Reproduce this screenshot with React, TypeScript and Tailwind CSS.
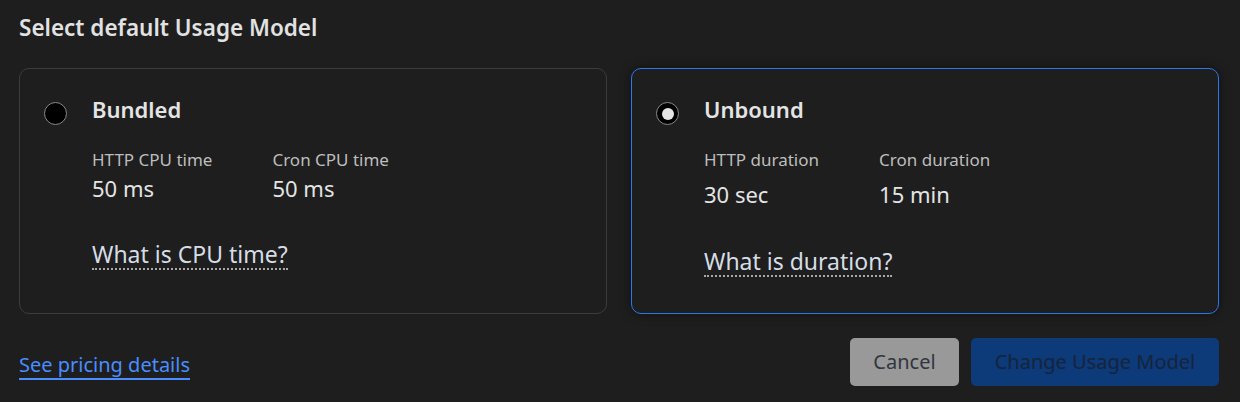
import { useState } from 'react';

type Plan = {
  id: string;
  name: string;
  stats: { label: string; value: string }[];
  link: string;
  valueGap: string;
  linkGap: string;
};

const plans: Plan[] = [
  {
    id: 'bundled',
    name: 'Bundled',
    stats: [
      { label: 'HTTP CPU time', value: '50 ms' },
      { label: 'Cron CPU time', value: '50 ms' },
    ],
    link: 'What is CPU time?',
    valueGap: 'mt-[2px]',
    linkGap: 'mt-[38px]',
  },
  {
    id: 'unbound',
    name: 'Unbound',
    stats: [
      { label: 'HTTP duration', value: '30 sec' },
      { label: 'Cron duration', value: '15 min' },
    ],
    link: 'What is duration?',
    valueGap: 'mt-[8px]',
    linkGap: 'mt-[39px]',
  },
];

const Radio = ({ checked }: { checked: boolean }) => (
  <span className="flex h-[23px] w-[23px] shrink-0 items-center justify-center rounded-full border border-[#8a8a8a] bg-black">
    {checked && <span className="h-[12px] w-[12px] rounded-full bg-[#e6e6e6]" />}
  </span>
);

const App = () => {
  const [selected, setSelected] = useState('unbound');

  return (
    <div
      className="h-[402px] w-[1240px] bg-[#1e1e1e] pl-[19px] pr-[21px] pt-[13px] text-[#e4e4e4]"
      style={{ fontFamily: '"Noto Sans", "Open Sans", sans-serif' }}
    >
      <h2 className="text-[22.5px] leading-[30px] font-semibold text-[#e2e2e2]">Select default Usage Model</h2>

      <div className="mt-[25px] grid grid-cols-2 gap-[24px]">
        {plans.map(plan => {
          const active = selected === plan.id;
          return (
            <div
              key={plan.id}
              onClick={() => setSelected(plan.id)}
              className={
                active
                  ? 'flex h-[246px] cursor-pointer items-start gap-[25px] rounded-[10px] border border-[#2a78ef] bg-[#1e1e1e] pt-[25px] pl-[24px] shadow-[0_0_12px_rgba(0,0,0,0.45)]'
                  : 'flex h-[246px] cursor-pointer items-start gap-[25px] rounded-[10px] border border-[#3c3c3c] bg-[#1e1e1e] pt-[25px] pl-[24px]'
              }
            >
              <div className="pt-[8px]">
                <Radio checked={active} />
              </div>
              <div className="flex flex-col">
                <div className="text-[22px] leading-[30px] font-semibold text-[#e4e4e4]">{plan.name}</div>
                <div className="mt-[24px] flex gap-[60px]">
                  {plan.stats.map(s => (
                    <div key={s.label} className="flex flex-col">
                      <span className="text-[17px] leading-[23px] text-[#bdbdbd]">{s.label}</span>
                      <span className={`${plan.valueGap} text-[22px] leading-[30px] text-[#e4e4e4]`}>{s.value}</span>
                    </div>
                  ))}
                </div>
                <a className={`${plan.linkGap} self-start border-b-2 border-dotted border-[#a8a8a8] text-[23px] leading-[27px] text-[#d6dde6]`}>
                  {plan.link}
                </a>
              </div>
            </div>
          );
        })}
      </div>

      <div className="mt-[24px] flex items-center justify-between">
        <a className="mt-[8px] border-b-2 border-[#4a8dff] text-[20px] leading-[26px] text-[#4a8dff]">See pricing details</a>
        <div className="flex gap-[12px]">
          <button className="h-[48px] w-[109px] rounded-[5px] bg-[#999999] text-[20px] text-[#30363f]">Cancel</button>
          <button className="h-[48px] w-[248px] rounded-[5px] bg-[#0d3a78] text-[20px] text-[#16243c]">Change Usage Model</button>
        </div>
      </div>
    </div>
  );
};

export default App;
